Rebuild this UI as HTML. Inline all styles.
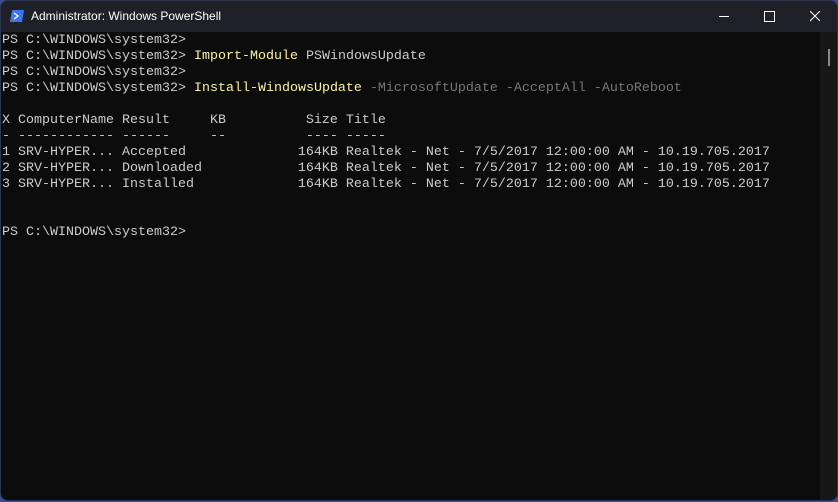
<!DOCTYPE html><html><head><style>
body{margin:0;width:838px;height:502px;background:#3a4a8a;overflow:hidden}
.win{position:absolute;left:0;top:0;width:838px;height:501px;background:#0c0c0c;border-radius:8px;overflow:hidden;border:1px solid #2b3550;box-sizing:border-box}
.tb{position:absolute;left:0;top:0;width:838px;height:31px;background:#1f2028}
.title{position:absolute;left:30px;top:8px;font:12px "Liberation Sans",sans-serif;color:#fff}
.sb{position:absolute;right:0;top:31px;width:17px;bottom:0;background:#171717}
.th{position:absolute;left:827px;top:48px;width:2px;height:17px;background:#8a8a8a}
pre{position:absolute;left:1px;top:32px;margin:0;font:13.33px/16px "Liberation Mono",monospace;color:#cccccc}
.y{color:#f9f1a5}.g{color:#767676}
</style></head><body><div class="win">
<div class="tb">
<svg style="position:absolute;left:9px;top:9px" width="14" height="12"><polygon points="2,0 14,0 12,12 0,12" fill="#3b78e7"/><path d="M4 3l4 3-4 3" stroke="#fff" stroke-width="1.3" fill="none"/></svg>
<div class="title">Administrator: Windows PowerShell</div>
<div style="position:absolute;left:718px;top:15px;width:10px;height:1px;background:#fff"></div>
<div style="position:absolute;left:763px;top:10px;width:9px;height:9px;border:1px solid #fff"></div>
<svg style="position:absolute;left:809px;top:10px" width="11" height="11"><path d="M0 0L10 10M10 0L0 10" stroke="#fff" stroke-width="1"/></svg>
</div>
<div class="sb"></div><div class="th"></div>
<pre>PS C:\WINDOWS\system32>
PS C:\WINDOWS\system32> <span class="y">Import-Module</span> PSWindowsUpdate
PS C:\WINDOWS\system32>
PS C:\WINDOWS\system32> <span class="y">Install-WindowsUpdate</span> <span class="g">-MicrosoftUpdate -AcceptAll -AutoReboot</span>

X ComputerName Result     KB          Size Title
- ------------ ------     --          ---- -----
1 SRV-HYPER... Accepted              164KB Realtek - Net - 7/5/2017 12:00:00 AM - 10.19.705.2017
2 SRV-HYPER... Downloaded            164KB Realtek - Net - 7/5/2017 12:00:00 AM - 10.19.705.2017
3 SRV-HYPER... Installed             164KB Realtek - Net - 7/5/2017 12:00:00 AM - 10.19.705.2017


PS C:\WINDOWS\system32></pre>
</div></body></html>
